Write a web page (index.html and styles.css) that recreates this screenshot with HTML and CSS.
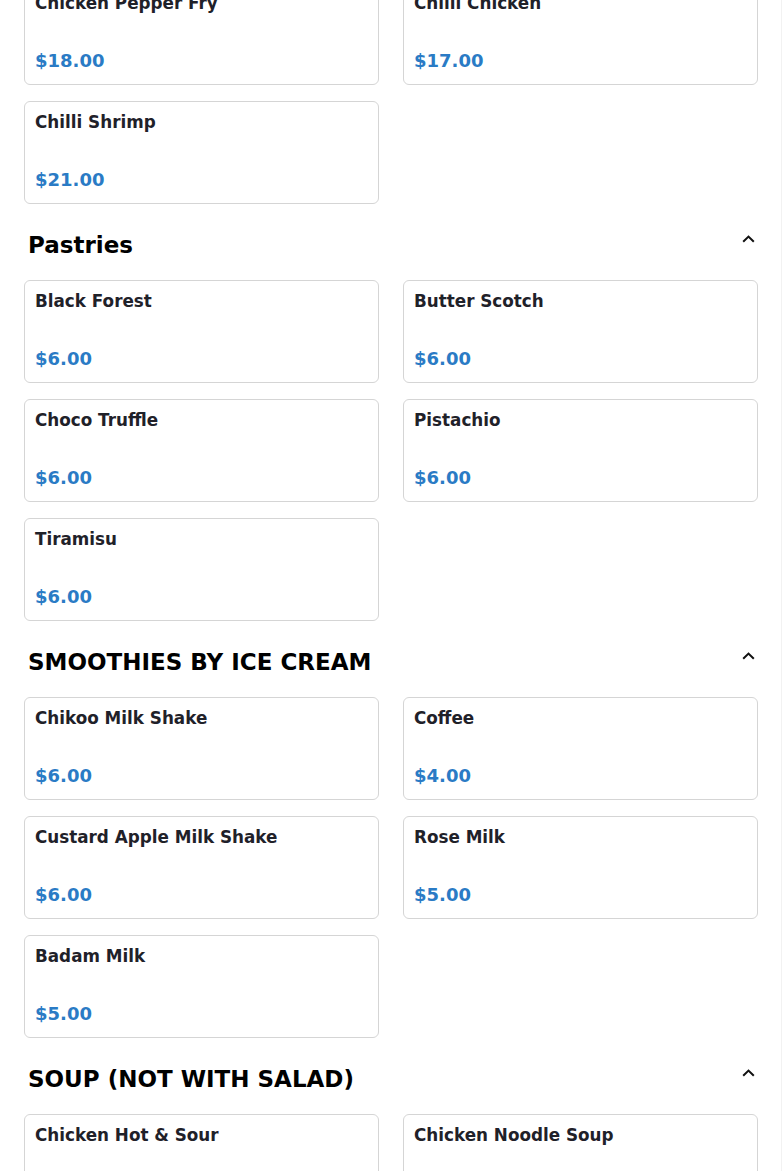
FILE: index.html
```html
<!DOCTYPE html>
<html lang="en">
<head>
<meta charset="utf-8">
<title>Menu</title>
<link rel="stylesheet" href="styles.css">
</head>
<body>
<main class="menu">
  <section class="category">
    <div class="grid">
      <div class="card"><div class="name">Chicken Pepper Fry</div><div class="price">$18.00</div></div>
      <div class="card"><div class="name">Chilli Chicken</div><div class="price">$17.00</div></div>
      <div class="card"><div class="name">Chilli Shrimp</div><div class="price">$21.00</div></div>
    </div>
  </section>

  <section class="category">
    <div class="cat-header">
      <h2 class="cat-title">Pastries</h2>
      <svg class="chevron" width="13" height="8" viewBox="0 0 13 8"><polyline points="1.2,6.8 6.5,1.6 11.8,6.8" fill="none" stroke="#111" stroke-width="2"/></svg>
    </div>
    <div class="grid">
      <div class="card"><div class="name">Black Forest</div><div class="price">$6.00</div></div>
      <div class="card"><div class="name">Butter Scotch</div><div class="price">$6.00</div></div>
      <div class="card"><div class="name">Choco Truffle</div><div class="price">$6.00</div></div>
      <div class="card"><div class="name">Pistachio</div><div class="price">$6.00</div></div>
      <div class="card"><div class="name">Tiramisu</div><div class="price">$6.00</div></div>
    </div>
  </section>

  <section class="category">
    <div class="cat-header">
      <h2 class="cat-title">SMOOTHIES BY ICE CREAM</h2>
      <svg class="chevron" width="13" height="8" viewBox="0 0 13 8"><polyline points="1.2,6.8 6.5,1.6 11.8,6.8" fill="none" stroke="#111" stroke-width="2"/></svg>
    </div>
    <div class="grid">
      <div class="card"><div class="name">Chikoo Milk Shake</div><div class="price">$6.00</div></div>
      <div class="card"><div class="name">Coffee</div><div class="price">$4.00</div></div>
      <div class="card"><div class="name">Custard Apple Milk Shake</div><div class="price">$6.00</div></div>
      <div class="card"><div class="name">Rose Milk</div><div class="price">$5.00</div></div>
      <div class="card"><div class="name">Badam Milk</div><div class="price">$5.00</div></div>
    </div>
  </section>

  <section class="category">
    <div class="cat-header">
      <h2 class="cat-title">SOUP (NOT WITH SALAD)</h2>
      <svg class="chevron" width="13" height="8" viewBox="0 0 13 8"><polyline points="1.2,6.8 6.5,1.6 11.8,6.8" fill="none" stroke="#111" stroke-width="2"/></svg>
    </div>
    <div class="grid">
      <div class="card"><div class="name">Chicken Hot &amp; Sour</div><div class="price"></div></div>
      <div class="card"><div class="name">Chicken Noodle Soup</div><div class="price"></div></div>
    </div>
  </section>
</main>
</body>
</html>
```

FILE: styles.css
```css
html, body {
  margin: 0;
  padding: 0;
  background: #ffffff;
}

body {
  font-family: "DejaVu Sans", "Noto Sans", sans-serif;
  overflow: hidden;
}

.menu {
  margin-top: -18px;
  padding: 0 24px 40px 24px;
  box-shadow: inset -1px 0 0 #f2f2f2;
}

.category + .category .cat-header {
  margin-top: 28px;
}

.cat-header {
  display: flex;
  justify-content: space-between;
  align-items: flex-start;
  height: 27px;
  margin-bottom: 21px;
}

.cat-title {
  margin: 0;
  padding-left: 4px;
  font-size: 23px;
  line-height: 27px;
  font-weight: bold;
  color: #000000;
}

.chevron {
  display: block;
  margin-top: 3px;
  margin-right: 3px;
}

.grid {
  display: grid;
  grid-template-columns: 1fr 1fr;
  column-gap: 24px;
  row-gap: 16px;
}

.card {
  box-sizing: border-box;
  height: 103px;
  border: 1px solid #d5d5d5;
  border-radius: 6px;
  padding: 10px 10px 11px 10px;
  display: flex;
  flex-direction: column;
  gap: 36px;
}

.name {
  font-size: 16.8px;
  line-height: 20px;
  font-weight: bold;
  color: #1f2129;
}

.price {
  font-size: 18px;
  line-height: 24px;
  height: 24px;
  font-weight: bold;
  color: #2a7bc5;
}
```
